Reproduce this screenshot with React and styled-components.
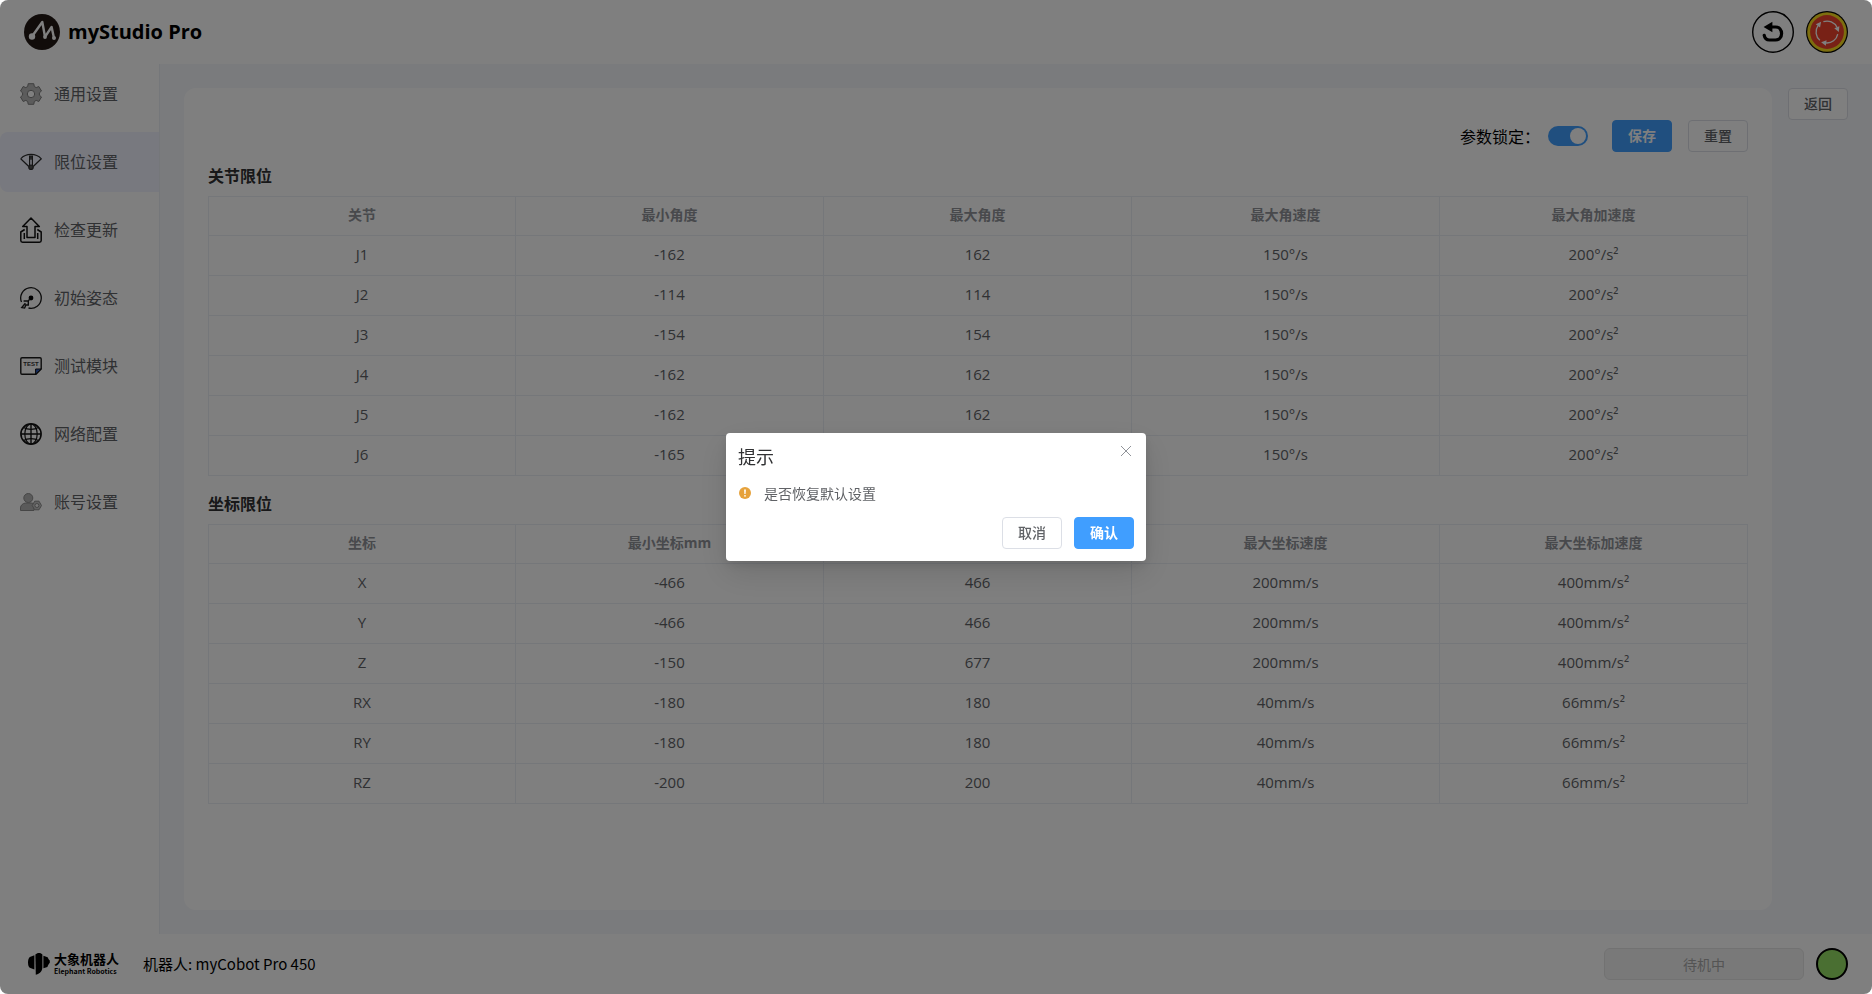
import { useState } from "react";
import styled, { createGlobalStyle } from "styled-components";

const colors = {
  PRIMARY: "#409eff",
  WARNING: "#e6a23c",
  TITLE: "#303133",
  TEXT: "#606266",
  HEAD: "#909399",
  BORDER: "#dcdfe6",
  LINE: "#ebeef5",
  PAGE: "#f5f7fa",
  ACTIVE: "#f0f2ff",
};

const menus = [
  { name: "通用设置", icon: <GearIcon /> },
  { name: "限位设置", icon: <LimitIcon /> },
  { name: "检查更新", icon: <UpdateIcon /> },
  { name: "初始姿态", icon: <PoseIcon /> },
  { name: "测试模块", icon: <TestIcon /> },
  { name: "网络配置", icon: <GlobeIcon /> },
  { name: "账号设置", icon: <AccountIcon /> },
];

const jointHead = ["关节", "最小角度", "最大角度", "最大角速度", "最大角加速度"];
const jointRows = [
  ["J1", "-162", "162", "150°/s", "200°/s²"],
  ["J2", "-114", "114", "150°/s", "200°/s²"],
  ["J3", "-154", "154", "150°/s", "200°/s²"],
  ["J4", "-162", "162", "150°/s", "200°/s²"],
  ["J5", "-162", "162", "150°/s", "200°/s²"],
  ["J6", "-165", "165", "150°/s", "200°/s²"],
];

const coordHead = ["坐标", "最小坐标mm", "最大坐标mm", "最大坐标速度", "最大坐标加速度"];
const coordRows = [
  ["X", "-466", "466", "200mm/s", "400mm/s²"],
  ["Y", "-466", "466", "200mm/s", "400mm/s²"],
  ["Z", "-150", "677", "200mm/s", "400mm/s²"],
  ["RX", "-180", "180", "40mm/s", "66mm/s²"],
  ["RY", "-180", "180", "40mm/s", "66mm/s²"],
  ["RZ", "-200", "200", "40mm/s", "66mm/s²"],
];

export default function App() {
  const [active, setActive] = useState(1);
  const [locked, setLocked] = useState(true);
  const [open, setOpen] = useState(true);

  return (
    <>
      <GlobalStyle />
      <Window>
        <Header>
          <Brand>
            <BrandLogo />
            <BrandName>myStudio Pro</BrandName>
          </Brand>
          <HeaderActions>
            <RoundButton aria-label="恢复">
              <UndoIcon />
            </RoundButton>
            <RoundButton aria-label="急停">
              <StopIcon />
            </RoundButton>
          </HeaderActions>
        </Header>

        <Body>
          <Sidebar>
            {menus.map((menu, index) => (
              <MenuItem
                key={menu.name}
                $active={index === active}
                onClick={() => setActive(index)}
              >
                {menu.icon}
                <MenuText>{menu.name}</MenuText>
              </MenuItem>
            ))}
          </Sidebar>
          <Main>
            <Panel>
              <Toolbar>
                <SwitchLabel htmlFor="lock">参数锁定：</SwitchLabel>
                <Switch
                  id="lock"
                  type="checkbox"
                  role="switch"
                  checked={locked}
                  onChange={(e) => setLocked(e.target.checked)}
                />
                <ToolbarButtons>
                  <Button $primary>保存</Button>
                  <Button onClick={() => setOpen(true)}>重置</Button>
                </ToolbarButtons>
              </Toolbar>
              <LimitSection title="关节限位" head={jointHead} rows={jointRows} />
              <LimitSection title="坐标限位" head={coordHead} rows={coordRows} />
            </Panel>
            <Button>返回</Button>
          </Main>
        </Body>

        <Footer>
          <Company>
            <ElephantLogo />
            <CompanyText>
              <CompanyCn>大象机器人</CompanyCn>
              <CompanyEn>Elephant Robotics</CompanyEn>
            </CompanyText>
          </Company>
          <Robot>机器人: myCobot Pro 450</Robot>
          <StatusButton disabled>待机中</StatusButton>
          <StatusLight />
        </Footer>
      </Window>

      {open && (
        <Overlay>
          <Dialog role="dialog" aria-modal="true" aria-labelledby="dialog-title">
            <DialogHeader>
              <DialogTitle id="dialog-title">提示</DialogTitle>
              <CloseButton aria-label="关闭" onClick={() => setOpen(false)}>
                <svg width="12" height="12" viewBox="0 0 12 12" fill="none" stroke="currentColor">
                  <path d="M1 1l10 10M11 1L1 11" />
                </svg>
              </CloseButton>
            </DialogHeader>
            <DialogContent>
              <WarningIcon />
              是否恢复默认设置
            </DialogContent>
            <DialogFooter>
              <Button onClick={() => setOpen(false)}>取消</Button>
              <Button $primary onClick={() => setOpen(false)}>
                确认
              </Button>
            </DialogFooter>
          </Dialog>
        </Overlay>
      )}
    </>
  );
}

function LimitSection({ title, head, rows }) {
  return (
    <Section>
      <SectionTitle>{title}</SectionTitle>
      <Table>
        <thead>
          <tr>
            {head.map((text) => (
              <th key={text} scope="col">
                {text}
              </th>
            ))}
          </tr>
        </thead>
        <tbody>
          {rows.map((row) => (
            <tr key={row[0]}>
              {row.map((cell, index) => (
                <td key={index}>{cell}</td>
              ))}
            </tr>
          ))}
        </tbody>
      </Table>
    </Section>
  );
}

function BrandLogo() {
  return (
    <svg width="36" height="36" viewBox="0 0 36 36" fill="none">
      <circle cx="18" cy="18" r="18" fill="#231815" />
      <path
        d="M8 22.5L18.3 8L21 22.8L27.6 13L30 24"
        stroke="#fff"
        strokeWidth="2.4"
        strokeLinejoin="round"
      />
      <circle cx="8" cy="22.5" r="3.2" fill="#fff" />
      <circle cx="21" cy="23" r="1.9" fill="#fff" />
      <circle cx="30" cy="24" r="2" fill="#fff" />
    </svg>
  );
}

function UndoIcon() {
  return (
    <svg width="42" height="42" viewBox="0 0 42 42" fill="none">
      <circle cx="21" cy="21" r="20.3" stroke="#000" strokeWidth="1.4" />
      <path d="M11.6 16L20.4 10.8V21.2Z" fill="#000" />
      <path
        d="M19 16H23.5C27.5 16 29.6 19 29.6 22.5C29.6 26.5 27 29 23.5 29H17.5C14.5 29 12.7 27.3 12.2 24.3"
        stroke="#000"
        strokeWidth="3.2"
        strokeLinecap="round"
      />
    </svg>
  );
}

function StopIcon() {
  return (
    <svg width="42" height="42" viewBox="0 0 42 42" fill="none">
      <circle cx="21" cy="21" r="21" fill="#000" />
      <circle cx="21" cy="21" r="19.8" fill="#fbdc1e" />
      <circle cx="21" cy="21" r="16.9" fill="#f0432c" />
      {[0, 120, 240].map((deg) => (
        <g key={deg} transform={`rotate(${deg} 21 21)`}>
          <path d="M17.4 10.7A11 11 0 0 1 31 16.4" stroke="#fff" strokeWidth="1.3" />
          <path d="M28.3 17.2L33.4 15.2L32.8 21Z" fill="#fff" />
        </g>
      ))}
    </svg>
  );
}

function GearIcon() {
  return (
    <svg width="22" height="22" viewBox="0 0 22 22" fill="none">
      <path
        d="M8.2 .7H13.8L14.3 3.5L16.2 4.6L18.8 3.5L21.5 8L19.4 9.8V12.2L21.5 14L18.8 18.5L16.2 17.4L14.3 18.5L13.8 21.3H8.2L7.7 18.5L5.8 17.4L3.2 18.5L.5 14L2.6 12.2V9.8L.5 8L3.2 3.5L5.8 4.6L7.7 3.5Z"
        fill="#b8b8b8"
        stroke="#7d7d7d"
        strokeLinejoin="round"
      />
      <circle cx="11" cy="11" r="3.7" fill="#fff" stroke="#7d7d7d" />
    </svg>
  );
}

function LimitIcon() {
  return (
    <svg width="22" height="22" viewBox="0 0 22 22" fill="none" stroke="#2b2b2b" strokeWidth="1.2">
      <path d="M.7 7.8C6 2 16 2 21.3 7.8L13.2 15.5M.7 7.8L8.8 15.5" />
      <path d="M9.6 14V5.2H12.4V14" />
      <circle cx="11" cy="7" r="1.1" />
      <circle cx="11" cy="16.2" r="2.2" fill="#555" />
    </svg>
  );
}

function UpdateIcon() {
  return (
    <svg
      width="22"
      height="26"
      viewBox="0 0 22 26"
      fill="none"
      stroke="#111"
      strokeWidth="1.5"
      strokeLinejoin="round"
    >
      <path d="M11 1L19.3 9.5H15V20.5H7V9.5H2.7Z" />
      <path d="M4.7 12.5L.8 15V23.5C.8 24.5 1.4 25.2 2.5 25.2H19.5C20.6 25.2 21.2 24.5 21.2 23.5V15L17.3 12.5" />
      <path d="M4.3 16V22M17.7 16V22" />
    </svg>
  );
}

function PoseIcon() {
  return (
    <svg width="22" height="22" viewBox="0 0 22 22" fill="none" stroke="#1a1a1a">
      <path d="M1.5 15A10.3 10.3 0 1 1 8.5 21" strokeWidth="1.3" />
      <circle cx="11" cy="11" r="2.4" fill="#000" stroke="none" />
      <path d="M9.8 12.2L8 14M3.6 14H8.3V18L6 17.8L4.6 21L1.8 20.6L5.4 16.2" strokeWidth="1.4" />
    </svg>
  );
}

function TestIcon() {
  return (
    <svg width="22" height="18" viewBox="0 0 22 18" fill="none">
      <path
        d="M2 .8H20C20.8 .8 21.2 1.2 21.2 2V12L16 17.2H2C1.2 17.2 .8 16.8 .8 16V2C.8 1.2 1.2 .8 2 .8Z"
        stroke="#1a1a1a"
        strokeWidth="1.4"
      />
      <path d="M15.6 17.2V12H21.2Z" fill="#2d5bbd" stroke="#111" />
      <text
        x="11"
        y="9"
        textAnchor="middle"
        fontSize="6"
        fontWeight="700"
        fontFamily="Liberation Sans, sans-serif"
        fill="#333"
      >
        TEST
      </text>
    </svg>
  );
}

function GlobeIcon() {
  return (
    <svg width="22" height="22" viewBox="0 0 22 22" fill="none" stroke="#111">
      <circle cx="11" cy="11" r="10.1" strokeWidth="1.6" />
      <ellipse cx="11" cy="11" rx="6.2" ry="10" strokeWidth="1.2" />
      <path d="M11 1V21M1 11H21" strokeWidth="1.4" />
      <path d="M3.6 4.6C7.5 7 14.5 7 18.4 4.6M3.6 17.4C7.5 15 14.5 15 18.4 17.4" strokeWidth="1.2" />
    </svg>
  );
}

function AccountIcon() {
  return (
    <svg width="22" height="18" viewBox="0 0 22 18" fill="none" stroke="#8c8c8c">
      <circle cx="8.3" cy="5" r="4.5" fill="#b4b4b4" />
      <path d="M.5 17.5V15C.5 12 3 10.4 5.5 10H11.5C12.5 10.1 13.4 10.5 14 11V17.5Z" fill="#b4b4b4" />
      <path d="M14.7 8.2H19L21.5 12.5L19 16.8H14.7L12.2 12.5Z" fill="#c4c4c4" strokeLinejoin="round" />
      <circle cx="16.9" cy="12.5" r="2" fill="#f0f0f0" />
    </svg>
  );
}

function ElephantLogo() {
  return (
    <svg width="22" height="22" viewBox="0 0 22 22" fill="#000">
      <path d="M6.4 2.2V16.4L1.8 14.8C.6 13.8 0 12 0 9.5S.6 5 1.8 4Z" />
      <path d="M7.4 1.6C8.2 .6 9.6 0 11 0S13.8 .6 14.4 1.6V14C14.4 17.5 12.5 20.5 7.8 21.8Z" />
      <path d="M15.4 2.8L19.6 4.2C20.2 5.4 20.6 6.4 21.8 7.4V9.8C20.6 11 20 12.6 19.4 14L15.4 15.2Z" />
    </svg>
  );
}

function WarningIcon() {
  return (
    <svg width="14" height="14" viewBox="0 0 14 14">
      <circle cx="7" cy="7" r="6" fill={colors.WARNING} />
      <path d="M6.1 3.5H7.9L7.6 8H6.4Z" fill="#fff" />
      <circle cx="7" cy="9.8" r=".9" fill="#fff" />
    </svg>
  );
}

const GlobalStyle = createGlobalStyle`
  * {
    box-sizing: border-box;
  }

  body {
    margin: 0;
    background: #fff;
    font-family: "Open Sans", "Noto Sans CJK SC", sans-serif;
    font-size: 16px;
    color: #000;
  }

  button {
    font-family: inherit;
    cursor: pointer;
  }
`;

const Window = styled.div`
  display: flex;
  flex-direction: column;
  min-height: 100vh;
  background: #fff;
`;

const Header = styled.header`
  display: flex;
  align-items: center;
  justify-content: space-between;
  height: 64px;
  padding: 0 24px;
`;

const Brand = styled.div`
  display: flex;
  align-items: center;
  gap: 8px;
`;

const BrandName = styled.div`
  font-size: 20px;
  line-height: 28px;
  font-weight: 700;
`;

const HeaderActions = styled.div`
  display: flex;
  gap: 12px;
`;

const RoundButton = styled.button`
  display: flex;
  padding: 0;
  border: 0;
  border-radius: 50%;
  background: transparent;
`;

const Body = styled.div`
  display: flex;
  flex: 1;
`;

const Sidebar = styled.nav`
  display: flex;
  flex-direction: column;
  flex: none;
  gap: 8px;
  width: 160px;
  border-right: 1px solid ${colors.LINE};
`;

const MenuItem = styled.button`
  display: flex;
  align-items: center;
  gap: 12px;
  height: 60px;
  padding: 0 20px;
  border: 0;
  border-radius: 8px 0 0 8px;
  background: ${({ $active }) => ($active ? colors.ACTIVE : "transparent")};
  color: ${colors.TEXT};
  font-size: 16px;
`;

const MenuText = styled.span`
  padding-bottom: 2px;
`;

const Main = styled.main`
  display: flex;
  flex: 1;
  align-items: flex-start;
  gap: 16px;
  padding: 24px;
  background: ${colors.PAGE};
`;

const Panel = styled.div`
  flex: 1;
  align-self: stretch;
  padding: 32px 24px;
  border-radius: 12px;
  background: #fff;
`;

const Toolbar = styled.div`
  display: flex;
  align-items: center;
  justify-content: flex-end;
  margin-bottom: 12px;
`;

const SwitchLabel = styled.label`
  margin-right: 8px;
`;

const Switch = styled.input`
  appearance: none;
  display: flex;
  align-items: center;
  justify-content: ${({ checked }) => (checked ? "flex-end" : "flex-start")};
  width: 40px;
  height: 20px;
  margin: 0;
  padding: 0 2px;
  border-radius: 10px;
  background: ${({ checked }) => (checked ? colors.PRIMARY : colors.BORDER)};
  cursor: pointer;

  &::before {
    content: "";
    width: 16px;
    height: 16px;
    border-radius: 50%;
    background: #fff;
  }
`;

const ToolbarButtons = styled.div`
  display: flex;
  gap: 16px;
  margin-left: 24px;
`;

const Button = styled.button`
  flex: none;
  width: 60px;
  height: 32px;
  padding: 0 0 2px;
  border: 1px solid ${({ $primary }) => ($primary ? colors.PRIMARY : colors.BORDER)};
  border-radius: 4px;
  background: ${({ $primary }) => ($primary ? colors.PRIMARY : "#fff")};
  color: ${({ $primary }) => ($primary ? "#fff" : colors.TEXT)};
  font-size: 14px;
  font-weight: ${({ $primary }) => ($primary ? 700 : 500)};
`;

const Section = styled.section`
  & + & {
    margin-top: 16px;
  }
`;

const SectionTitle = styled.h2`
  margin: 0 0 8px;
  color: ${colors.TITLE};
  font-size: 16px;
  line-height: 24px;
  font-weight: 700;
`;

const Table = styled.table`
  width: 100%;
  table-layout: fixed;
  border-spacing: 0;
  text-align: center;

  th,
  td {
    height: 40px;
    padding: 0 0 4px;
    border-right: 1px solid ${colors.LINE};
    border-bottom: 1px solid ${colors.LINE};
  }

  th:first-child,
  td:first-child {
    border-left: 1px solid ${colors.LINE};
  }

  th {
    border-top: 1px solid ${colors.LINE};
    color: ${colors.HEAD};
    font-size: 14px;
    font-weight: 700;
  }

  td {
    color: ${colors.TEXT};
    font-size: 15px;
  }
`;

const Footer = styled.footer`
  display: flex;
  align-items: center;
  gap: 12px;
  height: 60px;
  padding: 0 24px 0 28px;
`;

const Company = styled.div`
  display: flex;
  align-items: center;
  gap: 4px;
  margin-right: 12px;
`;

const CompanyText = styled.div`
  display: flex;
  flex-direction: column;
  white-space: nowrap;
`;

const CompanyCn = styled.div`
  font-size: 13px;
  line-height: 14px;
  font-weight: 700;
`;

const CompanyEn = styled.div`
  font-family: "Noto Sans CJK SC", sans-serif;
  font-size: 7px;
  line-height: 10px;
  font-weight: 700;
`;

const Robot = styled.div`
  margin-right: auto;
  padding-bottom: 2px;
  font-family: "Noto Sans CJK SC", sans-serif;
  font-size: 15px;
`;

const StatusButton = styled.button`
  width: 200px;
  height: 32px;
  border: 1px solid #e4e4e4;
  border-radius: 6px;
  background: #f3f3f3;
  color: #a8a8a8;
  font-size: 14px;
`;

const StatusLight = styled.div`
  width: 32px;
  height: 32px;
  border: 2px solid #000;
  border-radius: 50%;
  background: #95de64;
`;

const Overlay = styled.div`
  position: fixed;
  inset: 0;
  display: flex;
  align-items: center;
  justify-content: center;
  border-radius: 8px;
  background: rgba(0, 0, 0, 0.5);
`;

const Dialog = styled.div`
  width: 420px;
  padding: 12px;
  border-radius: 4px;
  background: #fff;
  box-shadow: 0 12px 32px rgba(0, 0, 0, 0.12), 0 4px 12px rgba(0, 0, 0, 0.1);
`;

const DialogHeader = styled.div`
  display: flex;
  align-items: flex-start;
  justify-content: space-between;
  height: 36px;
`;

const DialogTitle = styled.div`
  color: ${colors.TITLE};
  font-size: 18px;
  line-height: 24px;
`;

const CloseButton = styled.button`
  display: flex;
  padding: 0 2px;
  border: 0;
  background: transparent;
  color: ${colors.HEAD};
`;

const DialogContent = styled.div`
  display: flex;
  align-items: center;
  gap: 12px;
  height: 24px;
  color: ${colors.TEXT};
  font-size: 14px;
`;

const DialogFooter = styled.div`
  display: flex;
  justify-content: flex-end;
  gap: 12px;
  padding-top: 12px;
`;
